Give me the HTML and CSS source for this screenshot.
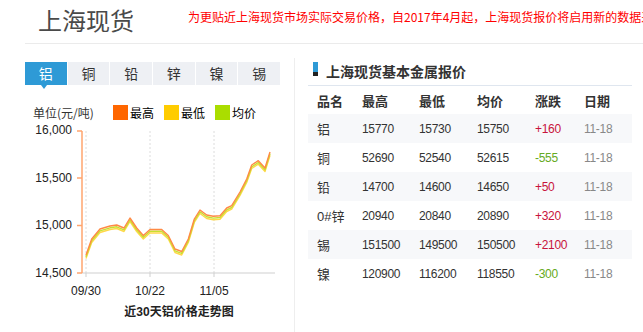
FILE: index.html
```html
<!DOCTYPE html>
<html lang="zh-CN">
<head>
<meta charset="utf-8">
<title>上海现货</title>
<link rel="stylesheet" href="styles.css">
</head>
<body>
<div class="header">
  <h1 class="site-title">上海现货</h1>
  <p class="notice">为更贴近上海现货市场实际交易价格，自2017年4月起，上海现货报价将启用新的数据采集方式</p>
</div>
<div class="main">
  <div class="left">
    <div class="tabs">
      <span class="tab active">铝</span>
      <span class="tab">铜</span>
      <span class="tab">铅</span>
      <span class="tab">锌</span>
      <span class="tab">镍</span>
      <span class="tab">锡</span>
    </div>
    <div class="legend">
      <span class="unit">单位(元/吨)</span>
      <span class="item"><i class="sw sw-high"></i>最高</span>
      <span class="item"><i class="sw sw-low"></i>最低</span>
      <span class="item"><i class="sw sw-avg"></i>均价</span>
    </div>
    <svg class="chart" width="255" height="180" viewBox="25 120 255 180">
      <g class="grid">
        <line x1="86" y1="131" x2="86" y2="273"/>
        <line x1="150" y1="131" x2="150" y2="273"/>
        <line x1="214" y1="131" x2="214" y2="273"/>
      </g>
      <g class="xaxis">
        <line x1="82" y1="273" x2="275" y2="273"/>
        <line x1="86" y1="273" x2="86" y2="277"/>
        <line x1="150" y1="273" x2="150" y2="277"/>
        <line x1="214" y1="273" x2="214" y2="277"/>
      </g>
      <g class="yaxis">
        <line x1="82" y1="131" x2="82" y2="273"/>
        <line x1="77" y1="131" x2="82" y2="131"/>
        <line x1="77" y1="178" x2="82" y2="178"/>
        <line x1="77" y1="225.5" x2="82" y2="225.5"/>
        <line x1="77" y1="273" x2="82" y2="273"/>
      </g>
      <g class="ylabels">
        <text x="72" y="130">16,000</text>
        <text x="72" y="178">15,500</text>
        <text x="72" y="225">15,000</text>
        <text x="72" y="272.5">14,500</text>
      </g>
      <g class="xlabels">
        <text x="86" y="291">09/30</text>
        <text x="150" y="291">10/22</text>
        <text x="214" y="291">11/05</text>
      </g>
      <polyline class="ln-low" transform="translate(0 3.5)" points="86,255 91.7,239 100,229 110,226 116.7,225 124,228 130,218 136.7,228 143.3,235.5 150,229.5 161.7,229.5 168.3,235.5 175,249 181.7,251.5 188.3,239 194.3,219 200,210 206.7,215 213.3,216.3 220,215.7 226.7,208 231.7,205.7 240,192 246.7,179 251.7,165 258.3,160.7 265,168 270,152"/>
      <polyline class="ln-avg" transform="translate(0 1.8)" points="86,255 91.7,239 100,229 110,226 116.7,225 124,228 130,218 136.7,228 143.3,235.5 150,229.5 161.7,229.5 168.3,235.5 175,249 181.7,251.5 188.3,239 194.3,219 200,210 206.7,215 213.3,216.3 220,215.7 226.7,208 231.7,205.7 240,192 246.7,179 251.7,165 258.3,160.7 265,168 270,152"/>
      <polyline class="ln-high" points="86,255 91.7,239 100,229 110,226 116.7,225 124,228 130,218 136.7,228 143.3,235.5 150,229.5 161.7,229.5 168.3,235.5 175,249 181.7,251.5 188.3,239 194.3,219 200,210 206.7,215 213.3,216.3 220,215.7 226.7,208 231.7,205.7 240,192 246.7,179 251.7,165 258.3,160.7 265,168 270,152"/>
    </svg>
    <div class="chart-title">近30天铝价格走势图</div>
  </div>
  <div class="right">
    <h2 class="panel-title"><i class="marker"></i>上海现货基本金属报价</h2>
    <table class="prices">
      <colgroup>
        <col class="c1"><col class="c2"><col class="c3"><col class="c4"><col class="c5"><col class="c6">
      </colgroup>
      <thead>
        <tr><th>品名</th><th>最高</th><th>最低</th><th>均价</th><th>涨跌</th><th>日期</th></tr>
      </thead>
      <tbody>
        <tr><td class="name">铝</td><td>15770</td><td>15730</td><td>15750</td><td class="up">+160</td><td class="date">11-18</td></tr>
        <tr><td class="name">铜</td><td>52690</td><td>52540</td><td>52615</td><td class="down">-555</td><td class="date">11-18</td></tr>
        <tr><td class="name">铅</td><td>14700</td><td>14600</td><td>14650</td><td class="up">+50</td><td class="date">11-18</td></tr>
        <tr><td class="name">0#锌</td><td>20940</td><td>20840</td><td>20890</td><td class="up">+320</td><td class="date">11-18</td></tr>
        <tr><td class="name">锡</td><td>151500</td><td>149500</td><td>150500</td><td class="up">+2100</td><td class="date">11-18</td></tr>
        <tr><td class="name">镍</td><td>120900</td><td>116200</td><td>118550</td><td class="down">-300</td><td class="date">11-18</td></tr>
      </tbody>
    </table>
  </div>
</div>
</body>
</html>
```

FILE: styles.css
```css
* { box-sizing: border-box; }
html, body {
  margin: 0;
  padding: 0;
  background: #fff;
  width: 643px;
  height: 332px;
  overflow: hidden;
  font-family: "Liberation Sans", "Noto Sans CJK SC", sans-serif;
  color: #333;
}

.header {
  height: 44px;
  margin-left: 25px;
  border-bottom: 1px solid #ebebeb;
  display: flex;
  align-items: flex-start;
  white-space: nowrap;
  overflow: hidden;
}
.site-title {
  margin: 8px 0 0 13px;
  font-size: 24px;
  line-height: 24px;
  font-weight: normal;
  color: #4a4a4a;
  font-family: "Noto Sans CJK SC", sans-serif;
}
.notice {
  margin: 11px 0 0 54px;
  font-size: 12px;
  line-height: 12px;
  color: #f00;
  font-family: "Noto Sans CJK SC", sans-serif;
}

.main {
  display: flex;
  margin-left: 25px;
  padding-top: 14px;
  height: 288px;
}

.left {
  width: 255px;
  padding-top: 4px;
}
.tabs {
  display: flex;
  gap: 1px;
  height: 23px;
}
.tab {
  flex: 1;
  background: #eef0f4;
  text-align: center;
  font-size: 14px;
  line-height: 23px;
  color: #333;
  font-family: "Noto Sans CJK SC", sans-serif;
  position: relative;
}
.tab.active {
  background: #2e9ad6;
  color: #fff;
}
.tab.active::after {
  content: "";
  position: absolute;
  left: 16px;
  top: 23px;
  border-left: 3px solid transparent;
  border-right: 3px solid transparent;
  border-top: 4px solid #2e9ad6;
}

.legend {
  display: flex;
  align-items: center;
  height: 16px;
  margin-top: 19px;
  padding-left: 8px;
  font-size: 12px;
  font-family: "Noto Sans CJK SC", sans-serif;
}
.unit {
  width: 80px;
  color: #333;
}
.item {
  width: 51px;
  display: flex;
  align-items: center;
  color: #000;
}
.sw {
  width: 15px;
  height: 15px;
  margin-right: 2px;
  display: block;
}
.sw-high { background: #ff6600; }
.sw-low { background: #ffcc00; }
.sw-avg { background: #aadd00; }

.chart { display: block; }
.grid line { stroke: #dcdcdc; stroke-width: 1; stroke-dasharray: 2 2; }
.xaxis line { stroke: #cfcfcf; stroke-width: 1; }
.yaxis line { stroke: #ffa56e; stroke-width: 1.5; }
.ylabels text {
  font-family: "Liberation Sans", sans-serif;
  font-size: 12px;
  fill: #222;
  text-anchor: end;
  dominant-baseline: central;
}
.xlabels text {
  font-family: "Liberation Sans", sans-serif;
  font-size: 12px;
  fill: #222;
  text-anchor: middle;
  dominant-baseline: central;
}
polyline { fill: none; stroke-width: 1.4; stroke-linejoin: round; }
.ln-high { stroke: #ff8a45; }
.ln-avg { stroke: #c8e030; }
.ln-low { stroke: #ffd84a; }

.chart-title {
  margin-top: 4px;
  padding-left: 53px;
  text-align: center;
  font-size: 12px;
  line-height: 16px;
  font-weight: bold;
  color: #222;
  font-family: "Liberation Sans", "Noto Sans CJK SC", sans-serif;
}

.right {
  margin-left: 14px;
  border-left: 1px solid #eeeeee;
  padding-left: 13px;
  width: 338px;
}
.panel-title {
  margin: 0;
  width: 324px;
  padding: 4px 0 6px 5px;
  height: 28px;
  border-bottom: 1px solid #dfe6ef;
  display: flex;
  align-items: flex-start;
  font-size: 14px;
  line-height: 18px;
  font-weight: bold;
  color: #333;
  font-family: "Noto Sans CJK SC", sans-serif;
}
.marker {
  display: block;
  width: 5px;
  height: 14px;
  margin-right: 8px;
  background: linear-gradient(#2e9ad6 0 10px, #222 10px 14px);
}

.prices {
  width: 324px;
  border-collapse: collapse;
  table-layout: fixed;
}
.c1 { width: 45px; }
.c2 { width: 57px; }
.c3 { width: 58px; }
.c4 { width: 58px; }
.c5 { width: 49px; }
.c6 { width: 57px; }
.prices th {
  height: 28px;
  padding: 0 0 0 9px;
  text-align: left;
  font-size: 13px;
  font-weight: bold;
  color: #333;
  font-family: "Noto Sans CJK SC", sans-serif;
}
.prices td {
  height: 29px;
  padding: 0 0 0 9px;
  font-size: 12px;
  color: #333;
  white-space: nowrap;
  letter-spacing: -0.3px;
}
.prices tbody tr:nth-child(odd) { background: #f7f8fa; }
.prices td.name {
  font-size: 13px;
  font-family: "Liberation Sans", "Noto Sans CJK SC", sans-serif;
  letter-spacing: 0;
}
.prices td.up { color: #c8143c; }
.prices td.down { color: #66aa22; }
.prices td.date { color: #888; }
```
